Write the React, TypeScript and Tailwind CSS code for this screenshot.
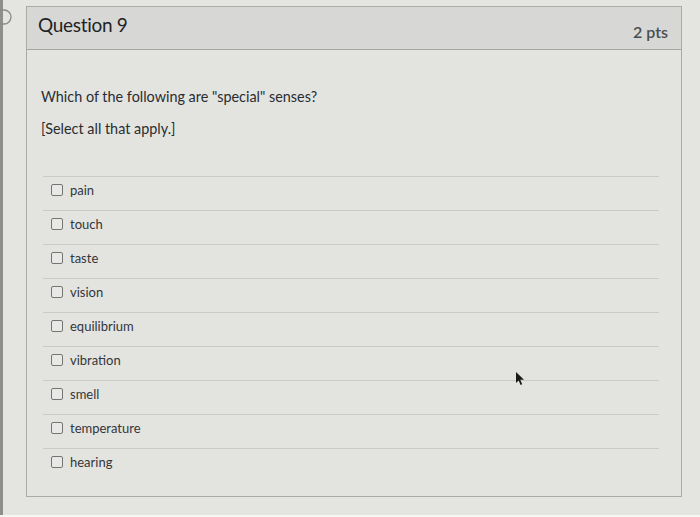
import React from "react";

const options = [
  "pain",
  "touch",
  "taste",
  "vision",
  "equilibrium",
  "vibration",
  "smell",
  "temperature",
  "hearing",
];

export default function App() {
  return (
    <div
      className="relative w-[700px] h-[517px] overflow-hidden bg-[#e4e5e1] flex"
      style={{ fontFamily: "Lato, 'Open Sans', sans-serif" }}
    >
      <div className="w-[3px] h-full bg-[#8e8e8a] shrink-0" />
      <svg
        className="absolute left-0 top-[8px]"
        width="14"
        height="18"
        viewBox="0 0 14 18"
      >
        <path
          d="M0 2 H4 A7 7 0 0 1 4 16 H0"
          fill="none"
          stroke="#8a8c88"
          strokeWidth="1.3"
        />
      </svg>
      <div className="flex flex-col w-full pt-[6px] pl-[23px] pr-[18px]">
        <div className="w-[656px] h-[491px] border border-[#a9aba6] bg-[#e3e4e0] flex flex-col">
          <div className="h-[43px] shrink-0 bg-[#d7d8d5] border-b border-[#a3a5a1] flex items-center justify-between pl-[11px] pr-[13px]">
            <span className="text-[19px] text-[#1f2326] tracking-[-0.3px] mb-[5px]">Question 9</span>
            <span className="text-[16px] font-semibold text-[#4a4d50] mt-[8px]">2 pts</span>
          </div>
          <div className="flex flex-col pl-[14px] pt-[38px]">
            <p className="text-[14.4px] leading-[18px] text-[#2a2d30]">
              Which of the following are "special" senses?
            </p>
            <p className="text-[14.4px] leading-[18px] text-[#2a2d30] mt-[14px]">
              [Select all that apply.]
            </p>
            <div className="mt-[38px] ml-[2px] mr-[22px] flex flex-col">
              {options.map((o) => (
                <div
                  key={o}
                  className="h-[34px] border-t border-[#cacbc7] flex items-start pt-[5px] pl-[8px] gap-[7px]"
                >
                  <span className="mt-[2px] w-[12px] h-[12px] rounded-[2px] border border-[#737673] bg-[#e8e9e6] shrink-0" />
                  <span className="text-[13px] leading-[16px] text-[#33363a]">{o}</span>
                </div>
              ))}
            </div>
          </div>
        </div>
      </div>
      <div className="absolute left-0 right-0 bottom-0 h-[2px] bg-[#f6f6f4]" />
      <svg
        className="absolute left-[515px] top-[371px]"
        width="10"
        height="15"
        viewBox="0 0 10 15"
      >
        <path d="M1 1 L1 12 L3.6 9.4 L5.6 14 L7.2 13.3 L5.3 8.8 L9 8.8 Z" fill="#1a1a1a" />
      </svg>
    </div>
  );
}
